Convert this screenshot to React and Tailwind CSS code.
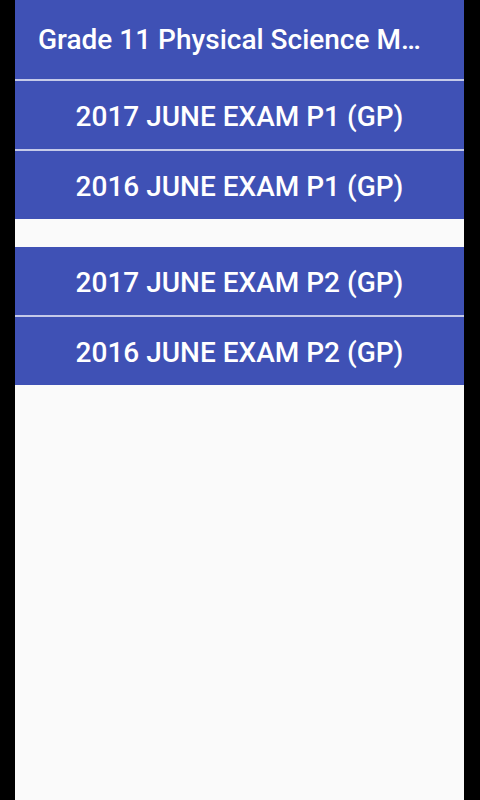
const exams = [
  ['2017 JUNE EXAM P1 (GP)', '2016 JUNE EXAM P1 (GP)'],
  ['2017 JUNE EXAM P2 (GP)', '2016 JUNE EXAM P2 (GP)'],
]

export default function App() {
  return (
    <div className="w-[480px] h-[800px] bg-black flex pl-[15px] pr-[16px]" style={{ fontFamily: 'Roboto, sans-serif' }}>
      <div className="flex-1 min-w-0 bg-[#fafafa] flex flex-col">
        <div className="h-[79px] bg-[#3f51b5] flex items-center pl-[23px] pr-[40px]">
          <h1 className="min-w-0 text-white text-[28px] font-medium truncate">Grade 11 Physical Science Memos</h1>
        </div>
        <div className="h-[2px] bg-[#c5cae9]" />
        {exams.map((group, gi) => (
          <div key={gi} className={`flex flex-col ${gi > 0 ? 'mt-[28px]' : ''}`}>
            {group.map((label, i) => (
              <div key={label} className="flex flex-col">
                {i > 0 && <div className="h-[2px] bg-[#c5cae9]" />}
                <button className="h-[68px] pt-[3px] bg-[#3f51b5] text-white text-[28px] font-medium flex items-center justify-center">
                  {label}
                </button>
              </div>
            ))}
          </div>
        ))}
      </div>
    </div>
  )
}
